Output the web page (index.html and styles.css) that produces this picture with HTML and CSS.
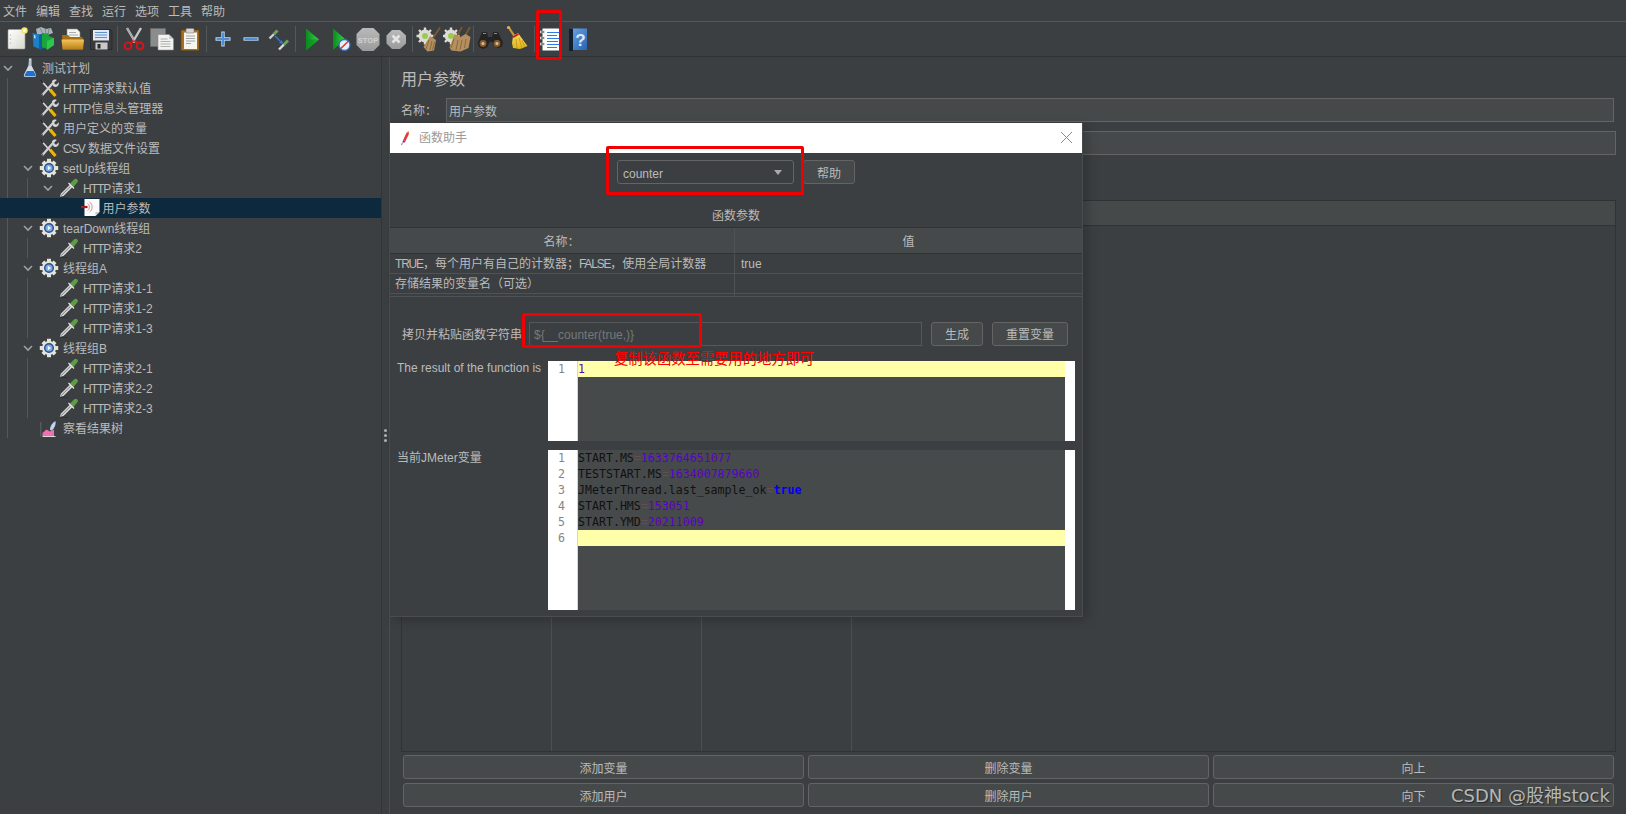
FILE: index.html
```html
<!DOCTYPE html>
<html lang="zh">
<head>
<meta charset="utf-8">
<title>JMeter 函数助手</title>
<link rel="stylesheet" href="styles.css">
</head>
<body>
<svg class="sprite" xmlns="http://www.w3.org/2000/svg">
<defs>
<linearGradient id="gPage" x1="0" y1="0" x2="1" y2="1"><stop offset="0" stop-color="#fff"/><stop offset="1" stop-color="#d8d8d0"/></linearGradient>
<linearGradient id="gFold" x1="0" y1="0" x2="0" y2="1"><stop offset="0" stop-color="#f4c55c"/><stop offset="1" stop-color="#b97e16"/></linearGradient>
<linearGradient id="gGreen" x1="0" y1="0" x2="1" y2="0"><stop offset="0" stop-color="#0c8a1c"/><stop offset="1" stop-color="#2fd24a"/></linearGradient>
<linearGradient id="gGray" x1="0" y1="0" x2="0" y2="1"><stop offset="0" stop-color="#b9b9b9"/><stop offset="1" stop-color="#9b9b9b"/></linearGradient>
<linearGradient id="gBlue" x1="0" y1="0" x2="1" y2="1"><stop offset="0" stop-color="#6aa6e6"/><stop offset="1" stop-color="#2a62b4"/></linearGradient>
<linearGradient id="gBroom" x1="0" y1="0" x2="0" y2="1"><stop offset="0" stop-color="#f7dc57"/><stop offset="1" stop-color="#e0b21c"/></linearGradient>

<symbol id="i-new" viewBox="0 0 28 28">
<rect x="5" y="4.500" width="17" height="19.500" rx="1" fill="url(#gPage)" stroke="#9a9a92" stroke-width=".6"/>
<circle cx="21.500" cy="5.500" r="3.200" fill="#f6e27a"/><circle cx="21.500" cy="5.500" r="1.500" fill="#fffbd0"/>
<circle cx="7.500" cy="10" r=".6" fill="#999"/><circle cx="7.500" cy="14" r=".6" fill="#999"/><circle cx="7.500" cy="18" r=".6" fill="#999"/>
</symbol>
<symbol id="i-templates" viewBox="0 0 28 28">
<path d="M5 4l5-2 5 2 5-1 2 5-8 3-8-2z" fill="#aab4b8"/><path d="M9 3l3 6M14 3l1 6M18 4l-1 6" stroke="#6e7a7e" stroke-width=".8"/>
<path d="M1.500 8l7 1.500V24l-6-2.500z" fill="#1f7fc4"/><path d="M3 10l1.500.4v3L3 13z" fill="#bfe2f7"/>
<path d="M8.500 9.500l5-1.500V23l-5 2z" fill="#0e5f9e"/><path d="M11 9.500l6-1.500 1 3 5 2v7l-7 4-5-2z" fill="#18a53a"/><path d="M16 25l7-5v-7l-7 3z" fill="#2fc64e"/>
</symbol>
<symbol id="i-open" viewBox="0 0 28 28">
<path d="M8 4h10l3 3v9H8z" fill="#f4f4f0" stroke="#8b8b85" stroke-width=".6"/><path d="M10 7.500h7M10 10h9M10 12.500h9" stroke="#9a9a9a" stroke-width=".8"/>
<path d="M3 10h6l2 2h12l1 2v10.500H4z" fill="#a86f12"/><path d="M2.500 14.500h22.500l-1 10H3.500z" fill="url(#gFold)"/>
</symbol>
<symbol id="i-save" viewBox="0 0 28 28">
<path d="M3.500 4.500h20l1.500 1.500v18.500H3.500z" fill="#3a3a3c" stroke="#1e1e1e" stroke-width=".6"/>
<rect x="6" y="5" width="16" height="10.500" fill="#dfe8f4"/><path d="M8 7.500h12M8 10h12M8 12.500h12" stroke="#5f93c8" stroke-width="1"/>
<rect x="8.500" y="17.500" width="12" height="7" fill="#c9c9c9"/><rect x="10.500" y="19" width="3" height="4.500" fill="#2a2a2a"/>
</symbol>
<symbol id="i-cut" viewBox="0 0 28 28">
<path d="M7 3l8.500 14.500M21 3L12.500 17.500" stroke="#c6c6c6" stroke-width="2.400"/>
<path d="M7 3l8.500 14.500" stroke="#8a8a8a" stroke-width=".7"/>
<circle cx="8" cy="21" r="3.400" fill="none" stroke="#d3161a" stroke-width="2"/><circle cx="20" cy="21" r="3.400" fill="none" stroke="#d3161a" stroke-width="2"/>
<path d="M10.500 18.500l3-3M17.500 18.500l-3-3" stroke="#d3161a" stroke-width="1.800"/>
</symbol>
<symbol id="i-copy" viewBox="0 0 28 28">
<rect x="2.500" y="3.500" width="15" height="18" fill="#8b8d8d" stroke="#6d6d6d" stroke-width=".6"/>
<path d="M10 9.500h11l4.500 4.500v11H10z" fill="#f2f2f0" stroke="#8a8a8a" stroke-width=".6"/><path d="M21 9.500v4.500h4.500" fill="#cfcfcf"/>
<path d="M12.500 14h7M12.500 16.500h10M12.500 19h10M12.500 21.500h10" stroke="#a8a8a8" stroke-width=".9"/>
</symbol>
<symbol id="i-paste" viewBox="0 0 28 28">
<rect x="5" y="5" width="18" height="20.500" rx="1" fill="#a8701c" stroke="#6c4510" stroke-width=".7"/>
<rect x="8" y="7.500" width="13" height="16.500" fill="#f5f5f2"/><rect x="10" y="3.500" width="8" height="4.500" rx="1" fill="#d8d8d8" stroke="#7a7a7a" stroke-width=".6"/>
<path d="M10 11h9M10 13.500h9M10 16h9M10 18.500h5" stroke="#9a9a9a" stroke-width=".9"/>
</symbol>
<symbol id="i-plus" viewBox="0 0 28 28"><path d="M14 6.500v15M6.500 14h15" stroke="#bcd6f0" stroke-width="3.400"/><path d="M14 7.500v13M7.500 14h13" stroke="#4d90d8" stroke-width="2"/></symbol>
<symbol id="i-minus" viewBox="0 0 28 28"><path d="M6.500 14h15" stroke="#bcd6f0" stroke-width="3.400"/><path d="M7.500 14h13" stroke="#4d90d8" stroke-width="2"/></symbol>
<symbol id="i-toggle" viewBox="0 0 28 28">
<path d="M4.500 13.500L9 9" stroke="#cfcfcf" stroke-width="2.400"/><path d="M9 9l3.500-3.500" stroke="#6da35a" stroke-width="3"/>
<path d="M14 24.500l5-5" stroke="#dcdcdc" stroke-width="2.400"/><path d="M19 19.500l4-4" stroke="#6da35a" stroke-width="3"/>
<path d="M10 11l5.500 5.500" stroke="#2f79e0" stroke-width="1.300"/><path d="M18 19l-4-1 3-3z" fill="#2f79e0"/>
</symbol>
<symbol id="i-play" viewBox="0 0 28 28"><path d="M8 3.500L21 14.500 8 25.500z" fill="url(#gGreen)"/><path d="M8 14.500L21 14.500 8 25.500z" fill="#0c8a1c" opacity=".55"/></symbol>
<symbol id="i-playno" viewBox="0 0 28 28">
<path d="M7 3.500L19 14 7 25z" fill="url(#gGreen)"/><circle cx="18.500" cy="20" r="5.500" fill="#e8f0fa" stroke="#2e6fc4" stroke-width="1.300"/><path d="M14.800 23.500l7.500-7.200" stroke="#d8382c" stroke-width="1.500"/>
</symbol>
<symbol id="i-stop" viewBox="0 0 28 28">
<path d="M8.500 3h11L25.500 9v11L19.500 26h-11L2.500 20V9z" fill="url(#gGray)"/>
<text class="stoptext" x="14" y="17.500" text-anchor="middle">STOP</text>
</symbol>
<symbol id="i-shut" viewBox="0 0 28 28">
<path d="M10 5h8l6 5.500v8L18 24h-8L4.500 18.500v-8z" fill="url(#gGray)"/><path d="M10.500 10.500l7 7M17.500 10.500l-7 7" stroke="#e4e4e4" stroke-width="2.600"/>
</symbol>
<symbol id="i-clear" viewBox="0 0 28 28">
<g id="gearsm"><circle cx="10" cy="11" r="6.500" fill="#dcdcd4"/><path d="M10 2.500v17M1.500 11h17M4 5l12 12M16 5L4 17" stroke="#dcdcd4" stroke-width="2.400"/><circle cx="10" cy="11" r="3" fill="#9acb4e"/></g>
<path d="M25 2.500L18 13" stroke="#7a5a32" stroke-width="1.800"/>
<path d="M15 11l6 4-2 10.500-6.500 1-4-4.500z" fill="#b5905e"/><path d="M14 15l-3 9M17 16l-2 9M19.500 17l-2 8" stroke="#7e5f38" stroke-width=".8"/>
</symbol>
<symbol id="i-clearall" viewBox="0 0 28 28">
<use href="#gearsm" x="-2"/>
<path d="M27 2L22 11M19 2L14 11" stroke="#7a5a32" stroke-width="1.600"/>
<path d="M11.500 9l6 3 5-3 5 3-2 11-8 3.500-9-1-2-3z" fill="#b5905e"/><path d="M11 14l-3 9M15 15l-2 10M19 15l-2 10M23 14l-1.500 9" stroke="#7e5f38" stroke-width=".8"/>
</symbol>
<symbol id="i-search" viewBox="0 0 28 28">
<path d="M6 7h5l1 5h4l1-5h5l5 10.500-1 4-4 1.500-4-2-1.500-4h-3L11.500 22l-4 2-4-1.500-2-4z" fill="#242424"/>
<circle cx="7" cy="18.500" r="3.400" fill="#8a5a28"/><circle cx="21" cy="18.500" r="3.400" fill="#8a5a28"/><circle cx="7" cy="18.500" r="1.500" fill="#d0c0a0"/><circle cx="21" cy="18.500" r="1.500" fill="#d0c0a0"/>
<path d="M7 8.500h3M18 8.500h3" stroke="#8c8c8c" stroke-width="1"/>
</symbol>
<symbol id="i-broom" viewBox="0 0 28 28">
<path d="M4.500 2l6.500 10" stroke="#c69a3a" stroke-width="2.200"/><circle cx="4.500" cy="2.500" r="1.600" fill="#e0b458"/>
<path d="M9 11l5-3 9.500 13-6 2.500-2.500.5-2-.5-4-.5-1-5z" fill="url(#gBroom)"/><path d="M8.500 11.500l5.500-3.300 1 1.500-5.500 3.300z" fill="#c2202a"/>
<path d="M12 14l1 9M15 13l3 10M18 15l3 7" stroke="#b88e14" stroke-width=".7"/>
</symbol>
<symbol id="i-func" viewBox="0 0 28 28">
<rect x="5.500" y="3.500" width="18" height="22" fill="#fbfdff"/>
<path d="M10 7.500h13M10 10.500h10M10 13.500h13M10 16.500h11M10 19.500h13M10 22.500h10" stroke="#2f7be6" stroke-width="1.200"/>
<path d="M3 7h5M3 13h5M3 19h5" stroke="#d6d6d6" stroke-width="2.400"/><path d="M4 7h3M4 13h3M4 19h3" stroke="#2a2a2a" stroke-width=".9"/>
</symbol>
<symbol id="i-help" viewBox="0 0 28 28">
<path d="M5 3.500h17V25H5z" fill="url(#gBlue)"/><path d="M4 3.500h4V26H4z" fill="#11202e"/>
<text class="helptext" x="15.500" y="20.500" text-anchor="middle">?</text>
</symbol>

<symbol id="t-flask" viewBox="0 0 20 20">
<path d="M9 0.500h2.500v7l4.500 9c.5 1.200-.2 2.500-1.500 2.500h-9c-1.300 0-2-1.300-1.500-2.500l4.500-9z" fill="#d0dde8"/>
<path d="M7 13h6.500l2.200 3.800c.3.700-.1 1.500-.9 1.500H5.700c-.8 0-1.200-.8-.9-1.500z" fill="#1e6fd0"/>
<path d="M10 2v6" stroke="#8fa2b2" stroke-width=".8"/>
</symbol>
<symbol id="t-tools" viewBox="0 0 20 20">
<path d="M2 2.500l13.500 15" stroke="#d9d9d9" stroke-width="1.600"/><path d="M1.500 2l2.500 3" stroke="#222" stroke-width="1.800"/>
<path d="M11 11.500l5.500 6.500" stroke="#f0b400" stroke-width="3"/>
<path d="M3 17.500L14 5" stroke="#cfcfcf" stroke-width="2.300"/>
<path d="M13 3.200c1-1.500 3-2 4.800-1.200l-2.500 2.500.5 1.700 1.700.4 2.200-2.400c.4 2-.4 3.800-2.200 4.500-1.200.5-2.300.2-3-.4-1.200-1-1.300-3.500-1.500-5.100z" fill="#d6d6d6"/>
<path d="M1.800 18.500l2-2" stroke="#444" stroke-width="1.500"/>
</symbol>
<symbol id="t-gear" viewBox="0 0 20 20">
<g fill="#e4e4dc"><circle cx="10" cy="10" r="7"/><path d="M8 0.800h4v4H8zM8 15.200h4v4H8zM0.800 8h4v4h-4zM15.200 8h4v4h-4z"/><path d="M2.500 5.300L5.300 2.500l2.800 2.800-2.800 2.800zM14.700 2.500l2.800 2.800-2.800 2.800-2.800-2.800zM5.300 17.500L2.500 14.700l2.800-2.800 2.800 2.800zM17.500 14.700l-2.800 2.800-2.800-2.800 2.800-2.800z"/></g>
<circle cx="10" cy="10" r="5" fill="#26508e"/><circle cx="10" cy="10" r="3.600" fill="#7aa8dc"/><path d="M8.800 7.800l3.400 2.200-3.400 2.200z" fill="#f2f6fb"/>
</symbol>
<symbol id="t-drop" viewBox="0 0 20 20">
<path d="M0.800 18.800L2 15.500 11 6.500 13.500 9 4.500 18z" fill="#d8d8d8"/><path d="M2 17.800L11.500 8.200" stroke="#6f7274" stroke-width=".9"/>
<path d="M10.500 6L15 1.500c1.200-1 2.500-1 3.300 0 .9 1 .7 2.300-.3 3.300L14 9.500z" fill="#5c9e40"/><path d="M9.500 5l5.500 5.500" stroke="#ededed" stroke-width="1.100"/>
<path d="M1 19.600h8" stroke="#2c2e30" stroke-width=".9"/>
</symbol>
<symbol id="t-pre" viewBox="0 0 20 20">
<path d="M3.500 1h15v13l-4 4h-11z" fill="#fbfbfb"/><path d="M14.500 18v-4h4" fill="#c8c8c8"/>
<path d="M6.500 5.500c2.500 1 2.500 6 0 7M8.500 4c3.500 2 3.500 8 0 10" fill="none" stroke="#e08a8a" stroke-width="1"/>
<path d="M0 9h6.500" stroke="#b01818" stroke-width="2.200"/>
</symbol>
<symbol id="t-view" viewBox="0 0 20 20">
<path d="M1.800 4v14.500" stroke="#6d7072" stroke-width=".8"/>
<path d="M3.500 18v-3l4-3.500 3.500 2 4-2V18z" fill="#ef6fb0"/><path d="M3.500 18.500h13" stroke="#d8d8d8" stroke-width="1"/>
<path d="M11 12c0-4 2.500-7.500 5.500-9 .6 3.500-1 7.500-4 9.500z" fill="#b9d6f4"/>
</symbol>
<symbol id="t-chev" viewBox="0 0 10 10"><path d="M1 3l4 4 4-4" fill="none" stroke="#9c9fa1" stroke-width="1.700"/></symbol>
<symbol id="t-pen" viewBox="0 0 14 20">
<path d="M4 12.500L8.500 3 11 1.500l.5 3-4.500 9.500z" fill="#e03a3a"/><path d="M8.500 3L11 1.500l.5 3z" fill="#f0963a"/><path d="M4 12.500l3 1.500-1.500 2-2.500-.5z" fill="#a02a7a"/><path d="M3 16l-1 3" stroke="#5a2a7a" stroke-width=".9"/>
</symbol>
</defs>
</svg>

<header class="menubar">
<span>文件</span><span>编辑</span><span>查找</span><span>运行</span><span>选项</span><span>工具</span><span>帮助</span>
</header>

<nav class="toolbar">
<svg class="tb"><use href="#i-new"/></svg>
<svg class="tb"><use href="#i-templates"/></svg>
<svg class="tb"><use href="#i-open"/></svg>
<svg class="tb"><use href="#i-save"/></svg>
<i class="sep"></i>
<svg class="tb"><use href="#i-cut"/></svg>
<svg class="tb"><use href="#i-copy"/></svg>
<svg class="tb"><use href="#i-paste"/></svg>
<i class="sep"></i>
<svg class="tb"><use href="#i-plus"/></svg>
<svg class="tb"><use href="#i-minus"/></svg>
<svg class="tb"><use href="#i-toggle"/></svg>
<i class="sep"></i>
<svg class="tb"><use href="#i-play"/></svg>
<svg class="tb"><use href="#i-playno"/></svg>
<svg class="tb"><use href="#i-stop"/></svg>
<svg class="tb"><use href="#i-shut"/></svg>
<i class="sep"></i>
<svg class="tb"><use href="#i-clear"/></svg>
<svg class="tb"><use href="#i-clearall"/></svg>
<i class="sep"></i>
<svg class="tb"><use href="#i-search"/></svg>
<svg class="tb"><use href="#i-broom"/></svg>
<i class="sep"></i>
<svg class="tb"><use href="#i-func"/></svg>
<svg class="tb"><use href="#i-help"/></svg>
</nav>

<div class="workspace">
<aside class="tree">
<div class="row l0"><svg class="chev"><use href="#t-chev"/></svg><svg class="ic"><use href="#t-flask"/></svg><span>测试计划</span></div>
<div class="row l1 leaf g1"><svg class="ic"><use href="#t-tools"/></svg><span><b class="la">HTTP</b>请求默认值</span></div>
<div class="row l1 leaf g1"><svg class="ic"><use href="#t-tools"/></svg><span><b class="la">HTTP</b>信息头管理器</span></div>
<div class="row l1 leaf g1"><svg class="ic"><use href="#t-tools"/></svg><span>用户定义的变量</span></div>
<div class="row l1 leaf g1"><svg class="ic"><use href="#t-tools"/></svg><span><b class="la">CSV </b>数据文件设置</span></div>
<div class="row l1 g1"><svg class="chev"><use href="#t-chev"/></svg><svg class="ic"><use href="#t-gear"/></svg><span>setUp线程组</span></div>
<div class="row l2 g2"><svg class="chev"><use href="#t-chev"/></svg><svg class="ic"><use href="#t-drop"/></svg><span><b class="la">HTTP</b>请求1</span></div>
<div class="row l3 selected"><svg class="ic"><use href="#t-pre"/></svg><span>用户参数</span></div>
<div class="row l1 g1"><svg class="chev"><use href="#t-chev"/></svg><svg class="ic"><use href="#t-gear"/></svg><span>tearDown线程组</span></div>
<div class="row l2 leaf g2"><svg class="ic"><use href="#t-drop"/></svg><span><b class="la">HTTP</b>请求2</span></div>
<div class="row l1 g1"><svg class="chev"><use href="#t-chev"/></svg><svg class="ic"><use href="#t-gear"/></svg><span>线程组A</span></div>
<div class="row l2 leaf g2"><svg class="ic"><use href="#t-drop"/></svg><span><b class="la">HTTP</b>请求1-1</span></div>
<div class="row l2 leaf g2"><svg class="ic"><use href="#t-drop"/></svg><span><b class="la">HTTP</b>请求1-2</span></div>
<div class="row l2 leaf g2"><svg class="ic"><use href="#t-drop"/></svg><span><b class="la">HTTP</b>请求1-3</span></div>
<div class="row l1 g1"><svg class="chev"><use href="#t-chev"/></svg><svg class="ic"><use href="#t-gear"/></svg><span>线程组B</span></div>
<div class="row l2 leaf g2"><svg class="ic"><use href="#t-drop"/></svg><span><b class="la">HTTP</b>请求2-1</span></div>
<div class="row l2 leaf g2"><svg class="ic"><use href="#t-drop"/></svg><span><b class="la">HTTP</b>请求2-2</span></div>
<div class="row l2 leaf g2"><svg class="ic"><use href="#t-drop"/></svg><span><b class="la">HTTP</b>请求2-3</span></div>
<div class="row l1 leaf g1"><svg class="ic"><use href="#t-view"/></svg><span>察看结果树</span></div>
</aside>

<div class="splitter"><i></i><i></i><i></i></div>

<main class="main">
<h1 class="heading">用户参数</h1>
<div class="field-row name-row"><label>名称：</label><div class="field">用户参数</div></div>
<div class="field-row comment-row"><label></label><div class="field"></div></div>
<section class="ptable">
<div class="phead"></div>
<div class="pbody"><i></i><i></i><i></i></div>
</section>
<div class="actions">
<button class="btn">添加变量</button><button class="btn">删除变量</button><button class="btn">向上</button>
<button class="btn">添加用户</button><button class="btn">删除用户</button><button class="btn">向下</button>
</div>
</main>
</div>

<section class="dialog">
<div class="titlebar">
<svg class="pen"><use href="#t-pen"/></svg><span class="dtitle">函数助手</span>
<svg class="close" viewBox="0 0 13 13"><path d="M1 1l11 11M12 1L1 12" stroke="#8c8c8c" stroke-width="1"/></svg>
</div>
<div class="pick-row">
<div class="select"><span>counter</span><i class="caret"></i></div>
<button class="btn help">帮助</button>
</div>
<div class="param-title">函数参数</div>
<div class="ftable">
<div class="cell head">名称：</div><div class="cell head">值</div>
<div class="cell"><b class="la2">TRUE</b>，每个用户有自己的计数器；<b class="la2">FALSE</b>，使用全局计数器</div><div class="cell val">true</div>
<div class="cell">存储结果的变量名（可选）</div><div class="cell val"></div>
<div class="cell tail"></div><div class="cell tail"></div>
</div>
<div class="copy-row">
<label>拷贝并粘贴函数字符串</label>
<div class="field dim">${__counter(true,)}</div>
<button class="btn small gen">生成</button>
<button class="btn small reset">重置变量</button>
</div>
<div class="ed-row first">
<label>The result of the function is</label>
<div class="editor short">
<div class="gutter"><span>1</span></div>
<div class="code"><div class="line cur"><em>1</em></div></div>
<div class="vbar"></div>
</div>
</div>
<div class="ed-row second">
<label>当前JMeter变量</label>
<div class="editor tall">
<div class="gutter"><span>1</span><span>2</span><span>3</span><span>4</span><span>5</span><span>6</span></div>
<div class="code">
<div class="line">START.MS<s>=</s><em>1633764651077</em></div>
<div class="line">TESTSTART.MS<s>=</s><em>1634007879660</em></div>
<div class="line">JMeterThread.last_sample_ok<s>=</s><strong>true</strong></div>
<div class="line">START.HMS<s>=</s><em>153051</em></div>
<div class="line">START.YMD<s>=</s><em>20211009</em></div>
<div class="line cur"></div>
</div>
<div class="vbar"></div>
</div>
</div>
<div class="redbox rb-select"></div>
<div class="redbox rb-input"></div>
<div class="note">复制该函数至需要用的地方即可</div>
</section>

<div class="redbox rb-tool"></div>
<div class="watermark">CSDN @股神stock</div>
</body>
</html>
```
FILE: styles.css
```css
* { box-sizing: border-box; }
html, body { margin: 0; height: 100%; }
body {
  width: 1626px; height: 814px; overflow: hidden; position: relative;
  display: flex; flex-direction: column;
  background: #3c3f41; color: #bbbbbb;
  font: 12px/16px "Liberation Sans", "Noto Sans CJK SC", sans-serif;
}
.sprite { position: absolute; width: 0; height: 0; }
.stoptext { font: bold 7.5px "Liberation Sans", sans-serif; fill: #d2d2d2; }
.helptext { font: bold 17px "Liberation Sans", sans-serif; fill: #dbe9f8; }

.menubar {
  height: 22px; flex: none; display: flex; align-items: center; gap: 9px;
  padding: 3px 0 0 3px; border-bottom: 1px solid #54585a;
}
.toolbar {
  height: 35px; flex: none; display: flex; align-items: center;
  padding-left: 3px; border-bottom: 1px solid #2f3133;
}
.tb { width: 28px; height: 28px; flex: none; }
.sep { width: 1px; height: 26px; background: #55585a; margin: 0 2px; flex: none; }

.workspace { flex: 1; display: flex; min-height: 0; }
.tree { width: 381px; flex: none; padding-top: 1px; }
.row { height: 20px; display: flex; align-items: center; white-space: pre; background-repeat: no-repeat; }
.row span { padding-top: 2px; }
.la { font-weight: normal; letter-spacing: -1px; margin-right: 1px; }
.la2 { font-weight: normal; letter-spacing: -1.2px; }
.chev { width: 10px; height: 10px; flex: none; }
.ic { width: 20px; height: 20px; flex: none; }
.l0 { padding-left: 3px; }
.l0 .chev { margin-right: 7px; }
.l0 .ic { margin-right: 2px; }
.l1 { padding-left: 22.5px; }
.l1 .chev, .l2 .chev { margin-right: 6.5px; }
.l1 .ic, .l2 .ic { margin-right: 4px; }
.l1.leaf { padding-left: 39px; }
.l2 { padding-left: 42.5px; }
.l2.leaf { padding-left: 59px; }
.l3 { padding-left: 81px; }
.l3 .ic { margin-right: 1.5px; }
.g1 { background-image: linear-gradient(#55585a, #55585a); background-size: 1px 100%; background-position: 7px 0; }
.g2 {
  background-image: linear-gradient(#55585a, #55585a), linear-gradient(#55585a, #55585a);
  background-size: 1px 100%, 1px 100%; background-position: 7px 0, 27px 0;
}
.selected { background: #0d293e; }

.splitter {
  width: 9px; flex: none; display: flex; flex-direction: column; align-items: center; justify-content: center; gap: 2px;
  border-left: 1px solid #323537; border-right: 1px solid #4b4e50;
}
.splitter i { width: 3px; height: 3px; border-radius: 50%; background: #b0b3b5; }

.main { flex: 1; min-width: 0; display: flex; flex-direction: column; padding: 13px 10px 7px 11px; }
.heading { margin: 0 0 8px; font-size: 16px; line-height: 20px; font-weight: normal; }
.field-row { display: flex; align-items: center; height: 24px; margin-bottom: 9px; }
.field-row label { width: 45px; flex: none; padding-top: 2px; }
.name-row { margin-right: 2px; }
.comment-row { margin-bottom: 45px; }
.field {
  flex: 1; height: 24px; line-height: 22px; padding: 2px 2px 0;
  background: #45494a; border: 1px solid #646464;
}
.ptable { flex: 1; min-height: 0; display: flex; flex-direction: column; border: 1px solid #303234; }
.phead { height: 25px; background: #45494a; border-bottom: 1px solid #303234; flex: none; }
.pbody { flex: 1; display: flex; }
.pbody i { width: 150px; border-right: 1px solid #4c4f51; }
.actions { display: grid; grid-template-columns: repeat(3, 1fr); gap: 4px; padding: 3px 2px 0; }
.btn {
  height: 24px; padding: 4px 0 0; font: inherit; color: #bbbbbb;
  background: #45494a; border: 1px solid #646464; border-radius: 3px;
}
.btn.small { padding-top: 2px; }

.dialog {
  position: absolute; left: 390px; top: 123px; width: 693px; height: 494px;
  background: #3c3f41; border: solid #4a4d4f; border-width: 0 1px 1px 0;
  box-shadow: 4px 3px 10px rgba(0, 0, 0, .22);
}
.titlebar { height: 30px; background: #fff; display: flex; align-items: center; position: relative; color: #999; padding-left: 10px; }
.pen { width: 11px; height: 16px; margin-right: 8px; flex: none; }
.close { position: absolute; right: 9px; top: 8px; width: 13px; height: 13px; }
.pick-row { display: flex; justify-content: center; gap: 9px; padding: 7px 0 0; }
.select {
  width: 177px; height: 24px; padding: 0 6px 0 5px; display: flex; align-items: center; justify-content: space-between;
  background: #3c3f41; border: 1px solid #646464; border-radius: 3px;
}
.select span { padding-top: 4px; }
.caret { border: solid transparent; border-width: 5px 4.5px 0; border-top-color: #a8abad; margin-right: 5px; }
.help { width: 52px; }
.param-title { text-align: center; margin-top: 24px; height: 19px; line-height: 16px; }
.ftable { display: grid; grid-template-columns: 345px 1fr; width: 692px; border-top: 1px solid #303234; }
.cell { height: 20px; line-height: 21px; padding: 0 6px; border-bottom: 1px solid #505355; white-space: nowrap; }
.cell:nth-child(odd) { border-right: 1px solid #505355; padding-left: 5px; }
.cell.head { height: 26px; line-height: 22px; padding-top: 3px; text-align: center; background: #45494a; border-bottom-color: #303234; }
.cell.tail { height: 3px; }
.copy-row { display: flex; align-items: center; height: 24px; margin-top: 25px; padding-left: 12px; }
.copy-row label { width: 110px; flex: 0 0 110px; white-space: nowrap; padding-top: 2px; }
.copy-row .field { flex: none; width: 393px; margin-left: 17px; background: #3c3f41; border-color: #55585a; padding: 1px 4px 0; }
.dim { color: #75787a; }
.gen { width: 52px; margin-left: 9px; flex: none; }
.reset { width: 76px; margin-left: 9px; flex: none; }
.ed-row { display: flex; padding-left: 7px; margin-top: 9px; }
.ed-row.first { margin-top: 15px; }
.ed-row label { width: 151px; flex: none; white-space: nowrap; line-height: 14px; }
.ed-row.second label { padding-top: 1px; }
.editor { width: 527px; display: flex; background: #474a4b; }
.short { height: 80px; }
.tall { height: 160px; }
.gutter {
  width: 30px; flex: none; background: #fff; border-right: 1px solid #d6d6d6;
  display: flex; flex-direction: column; color: #858585;
  font: 11.6px/16px "DejaVu Sans Mono", monospace; text-align: right; padding-right: 12px;
}
.code { flex: 1; font: 11.6px/16px "DejaVu Sans Mono", monospace; color: #111; }
.line { height: 16px; white-space: pre; }
.line.cur { background: #ffffaa; }
.line em { font-style: normal; color: #5a00c8; }
.line s { text-decoration: none; color: #6e4a4a; }
.line strong { color: #0000f0; }
.vbar { width: 10px; flex: none; background: #fff; }

.redbox { position: absolute; border: 3px solid #f00000; border-radius: 2px; }
.rb-select { left: 216px; top: 23px; width: 198px; height: 49px; }
.rb-input { left: 132px; top: 190px; width: 180px; height: 35px; }
.rb-tool { left: 536px; top: 10px; width: 26px; height: 50px; }
.note { position: absolute; left: 224px; top: 226px; color: #ff0000; font-size: 14.3px; line-height: 20px; white-space: nowrap; }
.watermark {
  position: absolute; left: 1451px; top: 785px; font: 18px/22px "DejaVu Sans", "Noto Sans CJK SC", sans-serif;
  color: #b4b7b8; text-shadow: 1px 1px 1px rgba(0, 0, 0, .45); white-space: nowrap;
}
```
